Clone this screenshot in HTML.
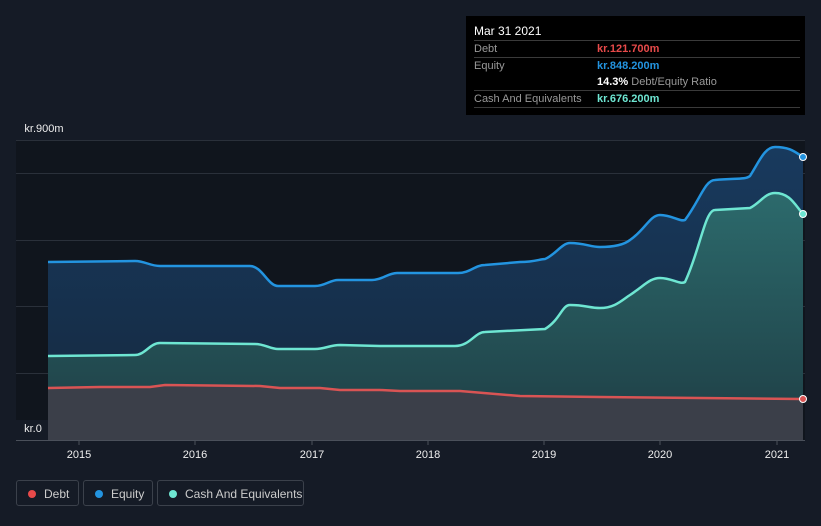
<!DOCTYPE html>
<html><head><style>
body{margin:0;background:#151b26;width:821px;height:526px;overflow:hidden;font-family:"Liberation Sans",sans-serif;position:relative}
.tt{position:absolute;left:466px;top:16px;width:339px;height:99px;background:#000;color:#fff;font-size:11px}
.tt .r{position:absolute;left:8px;right:5px;border-top:1px solid #3a3a3a;height:17px;line-height:17px;color:#999}
.tt .v{position:absolute;left:123px;font-weight:bold}
.lg{position:absolute;top:480px;height:26px;border:1px solid #3b414b;border-radius:3px;color:#ccc;font-size:12px;line-height:26px;box-sizing:border-box}
.lg i{position:absolute;left:11px;top:9px;width:8px;height:8px;border-radius:50%}
.lg span{position:absolute;left:27px}
</style></head><body>
<svg width="821" height="526" style="position:absolute;left:0;top:0">
<defs>
<linearGradient id="ge" x1="0" y1="0" x2="0" y2="1"><stop offset="0" stop-color="#183a5e"/><stop offset="1" stop-color="#15283e"/></linearGradient>
<linearGradient id="gc" x1="0" y1="0" x2="0" y2="1"><stop offset="0" stop-color="#2c6a6c"/><stop offset="1" stop-color="#1e3d44"/></linearGradient>
</defs>
<rect x="16" y="140" width="789" height="300" fill="#10151d"/>
<g stroke="#2a303a" stroke-width="1">
<line x1="16" y1="140.5" x2="805" y2="140.5"/><line x1="16" y1="173.5" x2="805" y2="173.5"/><line x1="16" y1="240.5" x2="805" y2="240.5"/><line x1="16" y1="306.5" x2="805" y2="306.5"/><line x1="16" y1="373.5" x2="805" y2="373.5"/>
</g>
<path d="M48,262 L135,261 C145,261 150,266 160,266 L250,266 C262,266 268,286 278,286 L315,286 C325,286 330,280 338,280 L372,280 C382,280 388,273 397,273 L458,273 C470,273 475,265 485,265 L520,262 C535,262 540,259 545,259 C555,255 562,243 570,243 C585,243 590,247 600,247 C615,247 625,244 630,240 C645,230 650,215 660,215 C672,215 680,222 685,220 C700,200 705,180 715,180 C735,178 745,180 750,176 C760,160 765,147 775,147 C790,147 795,152 803,157 L803,440 L48,440Z" fill="url(#ge)"/>
<path d="M48,356 L135,355 C145,355 150,343 160,343 L255,344 C265,344 270,349 278,349 L315,349 C325,349 330,345 340,345 L380,346 L455,346 C470,346 475,332 485,332 L545,329 C560,320 562,305 570,305 C585,305 590,308 600,308 C615,308 622,300 630,295 C645,285 650,278 660,278 C672,278 680,285 685,282 C700,250 705,210 715,210 L750,208 C760,203 765,193 775,193 C790,193 795,205 803,214 L803,440 L48,440Z" fill="url(#gc)"/>
<path d="M48,388 L100,387 L150,387 L165,385 L260,386 L280,388 L320,388 L340,390 L380,390 L400,391 L460,391 L520,396 L600,397 L700,398 L803,399 L803,440 L48,440Z" fill="#3b3f49"/>
<path d="M48,262 L135,261 C145,261 150,266 160,266 L250,266 C262,266 268,286 278,286 L315,286 C325,286 330,280 338,280 L372,280 C382,280 388,273 397,273 L458,273 C470,273 475,265 485,265 L520,262 C535,262 540,259 545,259 C555,255 562,243 570,243 C585,243 590,247 600,247 C615,247 625,244 630,240 C645,230 650,215 660,215 C672,215 680,222 685,220 C700,200 705,180 715,180 C735,178 745,180 750,176 C760,160 765,147 775,147 C790,147 795,152 803,157" fill="none" stroke="#2394e0" stroke-width="2.5"/>
<path d="M48,356 L135,355 C145,355 150,343 160,343 L255,344 C265,344 270,349 278,349 L315,349 C325,349 330,345 340,345 L380,346 L455,346 C470,346 475,332 485,332 L545,329 C560,320 562,305 570,305 C585,305 590,308 600,308 C615,308 622,300 630,295 C645,285 650,278 660,278 C672,278 680,285 685,282 C700,250 705,210 715,210 L750,208 C760,203 765,193 775,193 C790,193 795,205 803,214" fill="none" stroke="#6ee6d2" stroke-width="2.5"/>
<path d="M48,388 L100,387 L150,387 L165,385 L260,386 L280,388 L320,388 L340,390 L380,390 L400,391 L460,391 L520,396 L600,397 L700,398 L803,399" fill="none" stroke="#d95454" stroke-width="2.5"/>
<circle cx="803" cy="157" r="3.5" fill="#2394e0" stroke="#fff" stroke-width="1"/>
<circle cx="803" cy="214" r="3.5" fill="#6ee6d2" stroke="#fff" stroke-width="1"/>
<circle cx="803" cy="399" r="3.5" fill="#d95454" stroke="#fff" stroke-width="1"/>
<rect x="16" y="420" width="32" height="20" fill="#151b26"/>
<line x1="16" y1="440.5" x2="805" y2="440.5" stroke="#4a505a"/>
<g stroke="#4a505a"><line x1="79" y1="441" x2="79" y2="445"/><line x1="195" y1="441" x2="195" y2="445"/><line x1="312" y1="441" x2="312" y2="445"/><line x1="428" y1="441" x2="428" y2="445"/><line x1="544" y1="441" x2="544" y2="445"/><line x1="660" y1="441" x2="660" y2="445"/><line x1="777" y1="441" x2="777" y2="445"/></g>
<g fill="#eee" font-size="11" font-family="Liberation Sans" text-anchor="middle">
<text x="79" y="458">2015</text><text x="195" y="458">2016</text><text x="312" y="458">2017</text><text x="428" y="458">2018</text><text x="544" y="458">2019</text><text x="660" y="458">2020</text><text x="777" y="458">2021</text>
<text x="44" y="132">kr.900m</text><text x="33" y="432">kr.0</text>
</g>
</svg>
<div class="tt">
<div style="position:absolute;left:8px;top:8px;font-size:12px">Mar 31 2021</div>
<div class="r" style="top:24px">Debt<span class="v" style="color:#e84a4a">kr.121.700m</span></div>
<div class="r" style="top:41px">Equity<span class="v" style="color:#2394e0">kr.848.200m</span></div>
<div style="position:absolute;left:131px;top:58px;line-height:17px;color:#999"><b style="color:#fff">14.3%</b> Debt/Equity Ratio</div>
<div class="r" style="top:74px">Cash And Equivalents<span class="v" style="color:#6ee6d2">kr.676.200m</span></div>
<div class="r" style="top:91px;height:0"></div>
</div>
<div class="lg" style="left:16px;width:63px"><i style="background:#e84a4a"></i><span>Debt</span></div>
<div class="lg" style="left:83px;width:70px"><i style="background:#2394e0"></i><span>Equity</span></div>
<div class="lg" style="left:157px;width:147px"><i style="background:#6ee6d2"></i><span>Cash And Equivalents</span></div>
</body></html>
